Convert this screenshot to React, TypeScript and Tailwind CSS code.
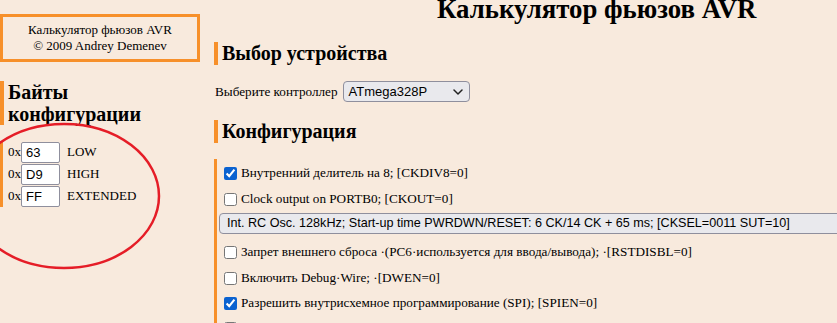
import React from "react";

function Chevron() {
  return (
    <svg width="10" height="6" viewBox="0 0 10 6" className="ml-auto">
      <path d="M1 1l4 4 4-4" fill="none" stroke="#222" strokeWidth="1.5" strokeLinecap="round" strokeLinejoin="round" />
    </svg>
  );
}

function Check({ checked, label }: { checked?: boolean; label?: string }) {
  return (
    <div className="flex items-center h-[20px] pl-[7px]">
      <input
        type="checkbox"
        defaultChecked={checked}
        className="m-0 w-[13px] h-[13px] accent-[#0b62d0] shrink-0"
      />
      {label ? <span className="ml-[4px] whitespace-nowrap">{label}</span> : null}
    </div>
  );
}

export default function App() {
  return (
    <div className="relative w-full h-[323px] overflow-hidden bg-[#f8eadd] text-[13px] text-[#000] font-['Liberation_Serif','Times_New_Roman',serif]">
      <div className="flex">
        {/* left column */}
        <div className="w-[200px] shrink-0">
          <div className="mt-[14px] border-[3px] border-[#f7902a] py-[5px] text-center leading-[16px]">
            <div>Калькулятор фьюзов AVR</div>
            <div>© 2009 Andrey Demenev</div>
          </div>
          <div className="mt-[19px] border-l-[4px] border-[#f7902a] pl-[4px] text-[20px] font-bold leading-[22px]">
            <div>Байты</div>
            <div>конфигурации</div>
          </div>
          <div className="mt-[16px] border-l-[3px] border-[#f7902a] pl-[5px]">
            {[
              ["63", "LOW"],
              ["D9", "HIGH"],
              ["FF", "EXTENDED"],
            ].map(([v, l]) => (
              <div key={l} className="flex items-center h-[22px]">
                <span>0x</span>
                <input
                  readOnly
                  value={v}
                  className="w-[39px] h-[21px] bg-white border border-[#8f8f9d] rounded-[2px] px-[4px] text-[13px] font-['Liberation_Sans',Arial,sans-serif] outline-none"
                />
                <span className="ml-[7px]">{l}</span>
              </div>
            ))}
          </div>
        </div>

        {/* main column */}
        <div className="ml-[14px] flex-1 min-w-0">
          <h1 className="-mt-[6px] pl-[223px] text-[26.8px] font-bold leading-[30px] whitespace-nowrap">
            Калькулятор фьюзов AVR
          </h1>
          <h2 className="mt-[18px] border-l-[4px] border-[#f7902a] pl-[4px] text-[20px] font-bold leading-[23px]">
            Выбор устройства
          </h2>
          <div className="mt-[16px] flex items-center">
            <span className="ml-[1px] whitespace-nowrap text-[13.2px]">Выберите контроллер</span>
            <div className="ml-[5px] flex items-center w-[127px] h-[21px] bg-[#e9e9ed] border border-[#8f8f9d] rounded-[4px] pl-[5px] pr-[6px] font-['Liberation_Sans',Arial,sans-serif]">
              <span>ATmega328P</span>
              <Chevron />
            </div>
          </div>
          <h2 className="mt-[18px] border-l-[4px] border-[#f7902a] pl-[4px] text-[20px] font-bold leading-[23px]">
            Конфигурация
          </h2>
          <div className="mt-[16px] border-l-[3px] border-[#f7902a] pt-[4px] pb-[20px] text-[13.2px]">
            <Check checked label="Внутренний делитель на 8; [CKDIV8=0]" />
            <div className="mt-[6px]">
              <Check label="Clock output on PORTB0; [CKOUT=0]" />
            </div>
            <div className="mt-[4px] ml-[2px] flex items-center w-[700px] h-[21px] bg-[#e9e9ed] border border-[#8f8f9d] rounded-[4px] pl-[7px] whitespace-nowrap text-[12.6px] font-['Liberation_Sans',Arial,sans-serif]">
              Int. RC Osc. 128kHz; Start-up time PWRDWN/RESET: 6 CK/14 CK + 65 ms; [CKSEL=0011 SUT=10]
            </div>
            <div className="mt-[8px]">
              <Check label="Запрет внешнего сброса ·(PC6·используется для ввода/вывода); ·[RSTDISBL=0]" />
            </div>
            <div className="mt-[6px]">
              <Check label="Включить Debug·Wire; ·[DWEN=0]" />
            </div>
            <div className="mt-[5px]">
              <Check checked label="Разрешить внутрисхемное программирование (SPI); [SPIEN=0]" />
            </div>
            <div className="mt-[5px]">
              <Check />
            </div>
          </div>
        </div>
      </div>

      {/* red ellipse annotation */}
      <svg className="absolute left-0 top-0 pointer-events-none" width="200" height="300">
        <ellipse cx="64" cy="196" rx="95" ry="72" fill="none" stroke="#e51d27" strokeWidth="2.5" />
      </svg>
    </div>
  );
}
